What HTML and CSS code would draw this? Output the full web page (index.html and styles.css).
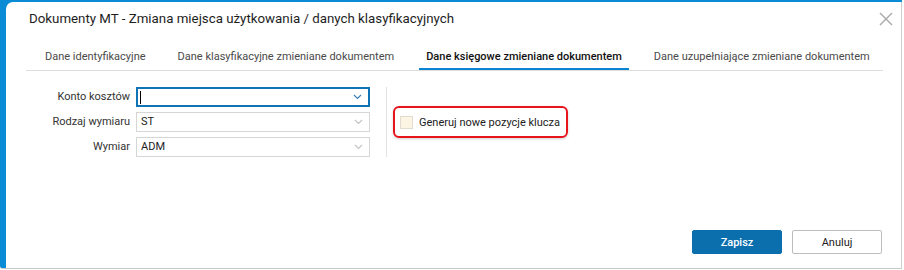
FILE: index.html
```html
<!DOCTYPE html>
<html lang="pl">
<head>
<meta charset="utf-8">
<link rel="stylesheet" href="styles.css">
</head>
<body>
<div class="frame">
  <div class="panel">
    <div class="header">
      <div class="title">Dokumenty MT - Zmiana miejsca użytkowania / danych klasyfikacyjnych</div>
      <svg class="close" width="14" height="14" viewBox="0 0 14 14"><path d="M1 1 L13 13 M13 1 L1 13" stroke="#a8a8a8" stroke-width="1.4" fill="none"/></svg>
    </div>
    <div class="tabs">
      <div class="tab">Dane identyfikacyjne</div>
      <div class="tab">Dane klasyfikacyjne zmieniane dokumentem</div>
      <div class="tab active">Dane księgowe zmieniane dokumentem</div>
      <div class="tab">Dane uzupełniające zmieniane dokumentem</div>
    </div>
    <div class="content">
      <div class="form">
        <label class="lbl">Konto kosztów</label>
        <div class="input focused"><span class="caret"></span><svg class="chev" width="9" height="6" viewBox="0 0 9 6"><path d="M1 1 L4.5 4.5 L8 1" stroke="#3a7fb8" stroke-width="1.2" fill="none"/></svg></div>
        <label class="lbl">Rodzaj wymiaru</label>
        <div class="input"><span class="val">ST</span><svg class="chev" width="9" height="6" viewBox="0 0 9 6"><path d="M1 1 L4.5 4.5 L8 1" stroke="#c4c4c4" stroke-width="1.2" fill="none"/></svg></div>
        <label class="lbl">Wymiar</label>
        <div class="input"><span class="val">ADM</span><svg class="chev" width="9" height="6" viewBox="0 0 9 6"><path d="M1 1 L4.5 4.5 L8 1" stroke="#c4c4c4" stroke-width="1.2" fill="none"/></svg></div>
      </div>
      <div class="sep"></div>
      <div class="checkgroup">
        <span class="box"></span>
        <span class="cblabel">Generuj nowe pozycje klucza</span>
      </div>
    </div>
    <div class="footer">
      <button class="btn primary">Zapisz</button>
      <button class="btn">Anuluj</button>
    </div>
  </div>
</div>
</body>
</html>
```
FILE: styles.css
```css
* { box-sizing: border-box; }
html, body { margin: 0; padding: 0; background: #ffffff; }
body { font-family: Roboto, "Liberation Sans", sans-serif; color: #212121; }

.frame {
  width: 902px;
  height: 269px;
  background: #0a8bd6;
  padding: 2px 0 0 6px;
  border-bottom: 1px solid #c8c8c8;
  border-bottom-left-radius: 3px;
}
.panel {
  height: 100%;
  background: #ffffff;
  border-top-left-radius: 7px;
  border-right: 1px solid #cfcfcf;
  display: flex;
  flex-direction: column;
}
.header {
  height: 33px;
  display: flex;
  align-items: center;
  justify-content: space-between;
  padding: 0 8px 0 23px;
}
.title {
  font-size: 13.3px;
  color: #1e1e1e;
}

.tabs {
  margin: 12px 18px 0 20px;
  padding-left: 12px;
  display: flex;
  gap: 18px;
  border-bottom: 1px solid #dedede;
  height: 24px;
}
.tab {
  font-size: 11px;
  color: #4a4a4a;
  padding: 0 7px;
  height: 23px;
  line-height: 20px;
  white-space: nowrap;
}
.tab.active {
  font-weight: 500;
  color: #111111;
  border-bottom: 2px solid #0a84d0;
}

.content {
  display: flex;
  align-items: flex-start;
  padding: 16px 0 0 20px;
}
.form {
  display: grid;
  grid-template-columns: 104px 234px;
  column-gap: 6px;
  row-gap: 5px;
}
.lbl {
  font-size: 11px;
  color: #333333;
  text-align: right;
  line-height: 20px;
  white-space: nowrap;
}
.input {
  height: 20px;
  border: 1px solid #d6d6d6;
  display: flex;
  align-items: center;
  padding: 0 6px 0 4px;
  font-size: 11px;
  color: #222222;
}
.input.focused {
  border: 2px solid #1073b5;
  padding-left: 2px;
}
.caret {
  width: 1px;
  height: 13px;
  background: #000000;
}
.val { line-height: 18px; }
.chev { margin-left: auto; }

.sep {
  width: 1px;
  height: 70px;
  background: #e2e2e2;
  margin-left: 16px;
}
.checkgroup {
  margin: 19px 0 0 6px;
  width: 175px;
  height: 32px;
  border: 2px solid #e8141c;
  border-radius: 6px;
  box-shadow: 0 1px 3px rgba(0,0,0,0.18);
  display: flex;
  align-items: center;
  padding-left: 5px;
}
.box {
  flex-shrink: 0;
  width: 13px;
  height: 13px;
  background: #fdf5e4;
  border: 1px solid #e0dccf;
}
.cblabel {
  font-size: 11px;
  color: #222222;
  margin-left: 6px;
  white-space: nowrap;
}

.footer {
  margin-top: auto;
  display: flex;
  justify-content: flex-end;
  gap: 10px;
  padding: 0 19px 14px 0;
}
.btn {
  width: 90px;
  height: 24px;
  font-family: Roboto, "Liberation Sans", sans-serif;
  font-size: 11px;
  border: 1px solid #bdbdbd;
  background: #ffffff;
  color: #222222;
  border-radius: 2px;
  padding: 0;
}
.btn.primary {
  background: #0b6fae;
  border-color: #0b6fae;
  color: #ffffff;
  font-weight: 500;
}
```
